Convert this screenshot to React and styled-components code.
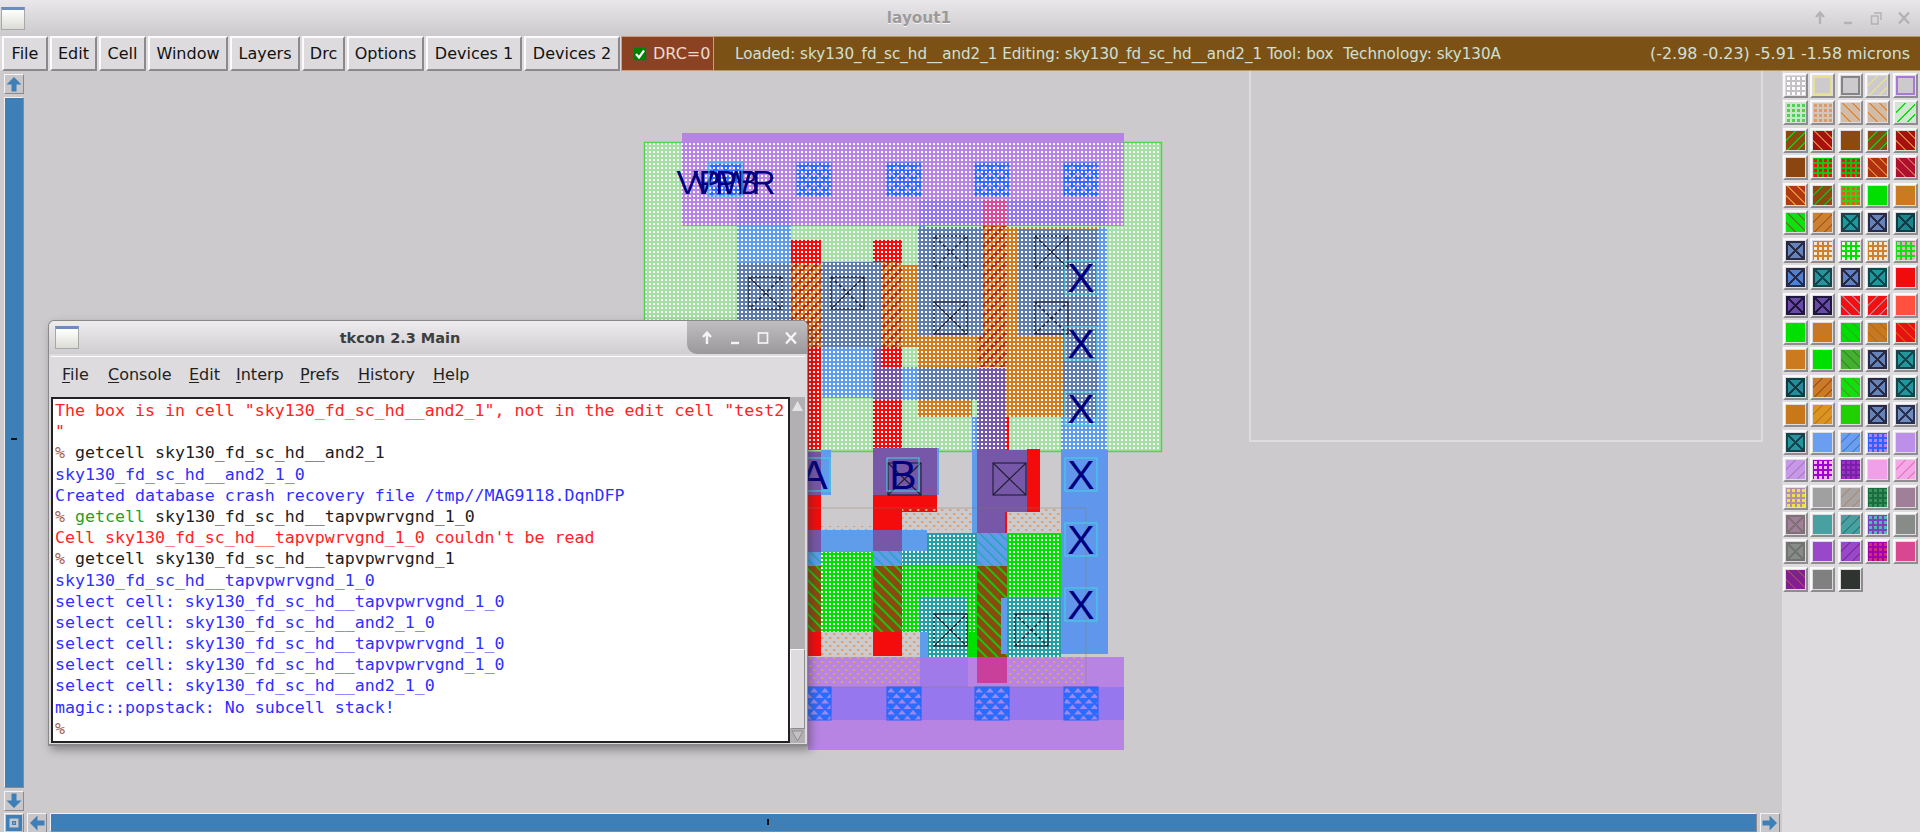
import React from 'react';
import styled, { createGlobalStyle } from 'styled-components';

const Global = createGlobalStyle`
  html, body { margin: 0; padding: 0; background: #cccacc; }
  body { font-family: 'DejaVu Sans', sans-serif; }
`;

const Screen = styled.div`
  position: relative;
  width: 1920px;
  height: 832px;
  overflow: hidden;
  display: flex;
  flex-direction: column;
  background: #cccacc;
`;

const TitleBar = styled.div`
  height: 36px;
  flex: none;
  display: flex;
  align-items: center;
  padding: 0 9px 0 1px;
  background: linear-gradient(#e9e7e9, #cbc9cb);
`;

const WinIcon = styled.div`
  width: 22px;
  height: 19px;
  flex: none;
  border: 1px solid #a8a8a8;
  border-top: 3px solid #6c8cc0;
  background: linear-gradient(#ffffff, #dcdcd6);
`;

const TitleText = styled.div`
  flex: 1;
  text-align: center;
  font-size: ${p => p.$size}px;
  font-weight: bold;
  color: ${p => p.$color};
  padding-left: ${p => p.$left}px;
  text-shadow: ${p => (p.$soft ? '0 1px 0 #f4f4f4' : 'none')};
`;

const WinButtons = styled.div`
  display: flex;
  align-items: center;
  gap: 14px;
`;

const Toolbar = styled.div`
  height: 35px;
  flex: none;
  display: flex;
  padding-left: 2px;
  gap: 2px;
  background: #dddbdd;
`;

const MenuButton = styled.div`
  width: ${p => p.$w}px;
  box-sizing: border-box;
  display: flex;
  align-items: center;
  justify-content: center;
  font-size: 16px;
  color: #111;
  background: #dddbdd;
  border: 2px solid;
  border-color: #fbfbfb #8b898b #8b898b #fbfbfb;
`;

const DrcBox = styled.div`
  width: 93px;
  margin-left: -1px;
  box-sizing: border-box;
  display: flex;
  align-items: center;
  gap: 7px;
  padding-left: 12px;
  font-size: 16px;
  color: #ecdccc;
  background: #8b4222;
  border: 1px solid #c8a080;
`;

const Check = styled.div`
  width: 12px;
  height: 12px;
  flex: none;
  display: flex;
  align-items: center;
  justify-content: center;
  background: #008000;
  outline: 1px solid #6a4a3a;
`;

const StatusBar = styled.div`
  flex: 1;
  margin-left: -2px;
  display: flex;
  justify-content: space-between;
  align-items: center;
  padding: 0 10px 0 21px;
  white-space: pre;
  color: #cfe0d6;
  background: #7b5116;
  border-top: 1px solid #b89868;
  border-bottom: 1px solid #b89868;
`;

const StatusText = styled.span`
  font-size: ${p => p.$size}px;
`;

const Body = styled.div`
  flex: 1;
  min-height: 0;
  display: flex;
`;

const LeftArea = styled.div`
  width: 1782px;
  flex: none;
  display: flex;
  flex-direction: column;
`;

const MiddleRow = styled.div`
  flex: 1;
  min-height: 0;
  display: flex;
`;

const VScroll = styled.div`
  width: 24px;
  flex: none;
  box-sizing: border-box;
  padding: 3px 0 2px 4px;
  display: flex;
  flex-direction: column;
  gap: 3px;
`;

const ArrowButton = styled.div`
  width: 20px;
  height: 20px;
  flex: none;
  box-sizing: border-box;
  border: 1px solid;
  border-color: #f4f4f4 #8b898b #8b898b #f4f4f4;
  background: #c8c6c8;
  display: flex;
  align-items: center;
  justify-content: center;
`;

const ArrowSvg = styled.svg`
  transform: rotate(${p => p.$rot}deg);
`;

const ScrollThumb = styled.div`
  position: relative;
  flex: 1;
  min-width: 0;
  box-sizing: border-box;
  background: #3f7fb7;
  border: 1px solid;
  border-color: #f0f0f0 #8b898b #8b898b #f0f0f0;
`;

const ThumbMark = styled.div`
  position: absolute;
  background: #111;
  ${p => (p.$vertical
    ? 'left: 6px; top: 340px; width: 6px; height: 2px;'
    : 'left: 716px; top: 5px; width: 2px; height: 6px;')}
`;

const Canvas = styled.div`
  position: relative;
  flex: 1;
  min-width: 0;
  background: #cccacc;
`;

const BoxOutline = styled.div`
  position: absolute;
  left: 1225px;
  top: 0;
  width: 510px;
  height: 369px;
  border: solid #dedcde;
  border-width: 0 2px 2px 2px;
`;

const HScroll = styled.div`
  height: 19px;
  flex: none;
  display: flex;
  gap: 3px;
  padding: 0 2px 0 4px;
`;

const Palette = styled.div`
  flex: 1;
  display: grid;
  grid-template-columns: repeat(5, 27.44px);
  grid-auto-rows: 27.44px;
  align-content: start;
  padding: 2px 0 0 1px;
  background: #dddbdd;
`;

const Swatch = styled.div`
  width: 25px;
  height: 25px;
  box-sizing: border-box;
  padding: 1px;
  border: 2px solid;
  border-color: #f8f8f8 #8e8c8e #8e8c8e #f8f8f8;
  background: #dddbdd;
`;

const fills = {
  hatch: p => `repeating-linear-gradient(135deg, transparent 0 6px, ${p.$ink} 6px 7.5px)`,
  back: p => `repeating-linear-gradient(45deg, transparent 0 6px, ${p.$ink} 6px 7.5px)`,
  dots: p => `radial-gradient(circle, ${p.$ink} 1.5px, transparent 2px) 0 0 / 5px 5px`,
  cross: p => `linear-gradient(45deg, transparent 47%, ${p.$ink} 47% 53%, transparent 53%),
    linear-gradient(-45deg, transparent 47%, ${p.$ink} 47% 53%, transparent 53%)`,
};

const SwatchFill = styled.div`
  width: 100%;
  height: 100%;
  box-sizing: border-box;
  background: ${p => (fills[p.$kind] ? `${fills[p.$kind](p)}, ${p.$bg}` : p.$bg)};
  ${p => (p.$kind === 'cross' || p.$kind === 'box' ? `box-shadow: inset 0 0 0 2px ${p.$ink};` : '')}
`;

const TkWindow = styled.div`
  position: absolute;
  left: 48px;
  top: 320px;
  width: 760px;
  height: 426px;
  box-sizing: border-box;
  display: flex;
  flex-direction: column;
  border-radius: 6px 6px 0 0;
  background: #dddbdd;
  border: 1px solid #8a888a;
  border-bottom-width: 2px;
  box-shadow: 3px 4px 8px rgba(50, 50, 50, 0.45);
`;

const TkTitle = styled.div`
  height: 33px;
  flex: none;
  display: flex;
  align-items: center;
  padding-left: 6px;
  border-radius: 6px 6px 0 0;
  background: linear-gradient(#eeecee, #cfcdcf);
`;

const TkButtons = styled.div`
  width: 120px;
  height: 33px;
  flex: none;
  box-sizing: border-box;
  padding-left: 13px;
  display: flex;
  align-items: center;
  border-radius: 0 6px 0 10px;
  background: linear-gradient(#c0bec0, #9a989a);
`;

const TkMenu = styled.div`
  height: 40px;
  flex: none;
  position: relative;
  margin: 2px 2px 0 2px;
  border-top: 1px solid #fbfbfb;
  font-size: 16px;
  color: #222;
`;

const TkMenuItem = styled.span`
  position: absolute;
  top: 8px;
  left: ${p => p.$x}px;
`;

const Key = styled.span`
  text-decoration: underline;
  text-underline-offset: 2px;
`;

const TkBody = styled.div`
  flex: 1;
  min-height: 0;
  display: flex;
  margin: 0 2px 1px 2px;
`;

const Console = styled.div`
  flex: 1;
  min-width: 0;
  box-sizing: border-box;
  padding: 1px 0 0 2px;
  background: #fff;
  border: 2px solid #222;
  font-family: 'DejaVu Sans Mono', monospace;
  font-size: 16.6px;
  line-height: 21.2px;
  white-space: pre;
  overflow: hidden;
`;

const Line = styled.div`
  height: 21.2px;
  color: ${p => p.$color};
`;

const Span = styled.span`
  color: ${p => p.$color};
`;

const TkScroll = styled.div`
  width: 15px;
  flex: none;
  display: flex;
  flex-direction: column;
  background: #b2b0b2;
  padding-top: 2px;
`;

const TkTrack = styled.div`
  flex: 1;
`;

const TkThumb = styled.div`
  height: 80px;
  flex: none;
  background: #dddbdd;
  border: 1px solid;
  border-color: #f8f8f8 #8e8c8e #8e8c8e #f8f8f8;
  box-sizing: border-box;
`;

const TkArrow = styled.div`
  height: 14px;
  flex: none;
  display: flex;
  justify-content: center;
  align-items: center;
`;

const LayoutSvg = styled.svg`
  position: absolute;
  left: 0;
  top: 0;
  display: block;
`;

const ArrowIcon = ({ rot }) => (
  <ArrowSvg $rot={rot} width="16" height="16" viewBox="0 0 16 16">
    <path d="M8 1L15.5 8.5H10.5V15.5H5.5V8.5H.5Z" fill="#3f7fb7" />
  </ArrowSvg>
);

const WinGlyphs = ({ color, wide }) => (
  <>
    <svg width="14" height="16" viewBox="0 0 14 16">
      <path d="M7 14V3M3 7L7 2.5L11 7" stroke={color} strokeWidth="2.4" fill="none" />
    </svg>
    <svg width="14" height="16" viewBox="0 0 14 16">
      <path d="M3 13H11" stroke={color} strokeWidth="2.4" fill="none" />
    </svg>
    <svg width="14" height="16" viewBox="0 0 14 16">
      {wide ? <rect x="2.5" y="3" width="9" height="10" stroke={color} strokeWidth="1.7" fill="none" />
        : <path d="M5 3H12V10M2.5 6H9V14H2.5Z" stroke={color} strokeWidth="1.5" fill="none" />}
    </svg>
    <svg width="14" height="16" viewBox="0 0 14 16">
      <path d="M2 2.5L12 13.5M12 2.5L2 13.5" stroke={color} strokeWidth="2.4" fill="none" />
    </svg>
  </>
);

const menus = [
  ['File', 46], ['Edit', 47], ['Cell', 47], ['Window', 80], ['Layers', 70],
  ['Drc', 43], ['Options', 77], ['Devices 1', 96], ['Devices 2', 96],
];

const tkMenus = [
  ['F', 'ile', 11], ['C', 'onsole', 57], ['E', 'dit', 138], ['I', 'nterp', 185],
  ['P', 'refs', 249], ['H', 'istory', 307], ['H', 'elp', 382],
];

const G = '#00e000', O = '#cc7a20', SL = '#6483b8', TE = '#22969c', DK = '#2a2a44';

// kind, background, ink
const swatches = [
  ['dots', '#c4c2c4', '#ffffff'], ['box', '#cccacc', '#e8e090'], ['box', '#cccacc', '#858585'], ['hatch', '#cccacc', '#e8e090'], ['box', '#cccacc', '#a878d8'],
  ['dots', '#c8e6c8', '#52d052'], ['dots', '#d2c6ba', '#dc9a68'], ['back', '#d2bca8', '#dc8a3c'], ['back', '#d2bca8', '#dc8a3c'], ['hatch', '#cfe8cf', '#14dc14'],
  ['hatch', '#8b4a10', '#18c818'], ['back', '#a81010', '#d08030'], ['solid', '#8b4a10'], ['hatch', '#8b4a10', '#18c818'], ['back', '#a81010', '#d08030'],
  ['solid', '#8b4510'], ['dots', '#10c810', '#f01010'], ['dots', '#10c010', '#e81818'], ['back', '#b03010', '#d08030'], ['back', '#b01030', '#d06050'],
  ['back', '#b03a10', '#e09030'], ['hatch', '#8b4a10', '#20b020'], ['dots', '#38d010', '#e06020'], ['solid', G], ['solid', O],
  ['back', '#10e010', '#508020'], ['hatch', '#cc8030', '#a86020'], ['cross', TE, '#14444c'], ['cross', SL, DK], ['cross', '#1c868c', '#103a44'],
  ['cross', SL, DK], ['dots', '#cc8030', '#f4e8d8'], ['dots', G, '#f0f8f0'], ['dots', '#cc8030', '#f4e8d8'], ['dots', '#10e010', '#e8b0c8'],
  ['cross', '#5080d0', DK], ['cross', TE, '#14444c'], ['cross', '#5a80c8', DK], ['cross', TE, '#14444c'], ['solid', '#f00c0c'],
  ['cross', '#6a4aa8', '#20183c'], ['cross', '#6a4aa8', '#20183c'], ['back', '#f41010', '#b08090'], ['hatch', '#f41010', '#b08090'], ['solid', '#ff5040'],
  ['solid', G], ['solid', '#c87820'], ['back', G, '#20b820'], ['back', '#c87820', '#b86c18'], ['back', '#e81010', '#d85010'],
  ['solid', O], ['solid', G], ['back', '#44b030', '#389028'], ['cross', SL, DK], ['cross', TE, '#14444c'],
  ['cross', '#2a8a9c', '#103a44'], ['hatch', '#cc7a28', '#a05818'], ['back', '#10e010', '#50a020'], ['cross', SL, DK], ['cross', TE, '#14444c'],
  ['solid', '#c87818'], ['hatch', '#dc9420', '#c07c18'], ['solid', '#20d000'], ['cross', SL, DK], ['cross', '#6e8cc0', '#2a3050'],
  ['cross', TE, '#14444c'], ['solid', '#6a9ef0'], ['hatch', '#6a9ef0', '#5080c8'], ['dots', '#3060ff', '#b080f0'], ['solid', '#bc90e8'],
  ['hatch', '#c898e8', '#b080c8'], ['dots', '#a000d0', '#f0b8f0'], ['dots', '#7a20a8', '#a030c8'], ['solid', '#f0a0e8'], ['hatch', '#f4a8e8', '#e880c0'],
  ['dots', '#b090b0', '#f0e040'], ['solid', '#a0a0a0'], ['hatch', '#a8a4a4', '#a89080'], ['dots', '#1c6c3c', '#389060'], ['solid', '#a08098'],
  ['cross', '#a08098', '#807078'], ['solid', '#48a0a0'], ['hatch', '#48a0a0', '#308080'], ['dots', '#7a40c0', '#48c0b0'], ['solid', '#888c88'],
  ['cross', '#888c88', '#707470'], ['solid', '#9848c8'], ['hatch', '#9848c8', '#8030a0'], ['dots', '#a000b0', '#d03070'], ['solid', '#d84890'],
  ['back', '#802090', '#a04070'], ['solid', '#808080'], ['solid', '#303430'],
];

const NW = '#a4dfa4';
const BLUE = '#5f9cea', MET = '#b884e4', METLI = '#9677ee', SLATE = '#5f7cae', RED = '#f40c0c', ORG = '#d27c20';
const PUR = '#7758a8', POLYH = 'url(#polyHatch)', GATE = 'url(#gateHatch)', TEALH = 'url(#tealHatch)', TEAL = '#22a0a4';
const DOTS = 'url(#whiteDots)', TAN = 'url(#tanDots)', VIA = 'url(#viaTri)';

// x1, y1, x2, y2, fill: painted in order, later ones sit on top
const topLayers = [
  [682, 133, 1124, 226, MET],
  [737, 200, 791, 226, METLI],
  [919, 200, 1107, 226, METLI],
  [737, 226, 791, 263, BLUE],
  [737, 263, 791, 320, SLATE],
  [791, 240, 821, 263, RED],
  [791, 263, 823, 347, ORG],
  [791, 263, 823, 347, POLYH],
  [808, 347, 821, 450, RED],
  [822, 262, 881, 347, SLATE],
  [822, 347, 874, 398, BLUE],
  [873, 240, 902, 262, RED],
  [881, 262, 902, 347, ORG],
  [881, 262, 902, 347, POLYH],
  [873, 347, 902, 400, PUR],
  [881, 347, 902, 367, RED],
  [873, 400, 902, 452, RED],
  [902, 265, 918, 335, ORG],
  [919, 226, 925, 263, BLUE],
  [918, 227, 983, 335, SLATE],
  [983, 200, 1007, 226, '#d84c9c'],
  [1007, 227, 1018, 335, ORG],
  [1018, 227, 1098, 229, ORG],
  [1018, 229, 1098, 335, SLATE],
  [1098, 227, 1107, 452, BLUE],
  [902, 335, 1063, 367, ORG],
  [902, 347, 918, 367, NW],
  [1006, 367, 1063, 417, ORG],
  [918, 400, 972, 417, ORG],
  [918, 367, 977, 400, SLATE],
  [902, 367, 918, 400, BLUE],
  [983, 226, 1007, 335, ORG],
  [983, 226, 1007, 335, POLYH],
  [977, 335, 1007, 367, ORG],
  [977, 335, 1007, 367, POLYH],
  [977, 368, 1006, 452, PUR],
  [972, 417, 977, 452, BLUE],
  [1006, 417, 1009, 452, RED],
  [1063, 335, 1098, 417, SLATE],
  [1061, 417, 1098, 452, BLUE],
];

const lowerLayers = [
  [808, 452, 821, 495, PUR],
  [821, 450, 831, 495, BLUE],
  [808, 495, 821, 530, RED],
  [873, 448, 937, 495, PUR],
  [937, 448, 939, 495, BLUE],
  [873, 495, 937, 512, RED],
  [873, 512, 902, 530, RED],
  [821, 526, 873, 530, TAN],
  [902, 508, 972, 530, TAN],
  [1007, 508, 1062, 533, TAN],
  [972, 450, 977, 533, BLUE],
  [977, 450, 1027, 512, PUR],
  [1027, 449, 1040, 512, RED],
  [977, 512, 1007, 533, PUR],
  [1005, 512, 1007, 566, RED],
  [1061, 450, 1108, 654, '#6097ec'],
  [821, 530, 873, 552, BLUE],
  [808, 530, 821, 552, PUR],
  [873, 530, 902, 551, PUR],
  [902, 530, 927, 551, BLUE],
  [821, 552, 873, 632, G],
  [902, 551, 977, 632, G],
  [927, 533, 977, 566, TEAL],
  [902, 551, 927, 566, TEAL],
  [1007, 533, 1061, 598, G],
  [1007, 598, 1061, 657, TEAL],
  [920, 598, 968, 632, TEAL],
  [928, 632, 968, 657, TEAL],
  [968, 632, 977, 657, G],
  [920, 632, 928, 657, BLUE],
  [808, 552, 821, 566, BLUE],
  [873, 551, 902, 566, BLUE],
  [977, 533, 1007, 566, BLUE],
  [808, 552, 821, 566, TEALH],
  [873, 551, 902, 566, TEALH],
  [977, 533, 1007, 566, TEALH],
  [808, 566, 821, 632, '#8b4a10'],
  [808, 566, 821, 632, GATE],
  [873, 566, 902, 632, '#8b4a10'],
  [873, 566, 902, 632, GATE],
  [977, 566, 1007, 657, '#8b4a10'],
  [977, 566, 1007, 657, GATE],
  [1001, 598, 1007, 654, BLUE],
  [808, 632, 821, 656, RED],
  [873, 632, 902, 656, RED],
  [821, 632, 873, 657, TAN],
  [902, 632, 920, 657, TAN],
  [808, 657, 1124, 750, MET],
  [808, 687, 1124, 720, METLI],
  [808, 657, 920, 685, TAN],
  [1007, 657, 1085, 683, TAN],
  [920, 657, 968, 687, '#a07ae8'],
  [977, 657, 1007, 683, '#c8409a'],
];

const lowerDots = [
  [821, 552, 873, 632],
  [902, 551, 977, 632],
  [928, 632, 968, 657],
  [1007, 533, 1061, 657],
  [927, 533, 977, 551],
];

const vias = [709, 797, 887, 975, 1064];
const contactsTop = [[749, 277], [831, 277], [934, 236], [934, 302], [1035, 236], [1035, 302]];
const contactsLow = [[888, 463], [993, 463]];
const contactsDiff = [[934, 614], [1015, 614]];
const pinY = [261, 327, 392, 458, 523, 588];

const R = ({ r }) => <rect x={r[0]} y={r[1]} width={r[2] - r[0]} height={r[3] - r[1]} fill={r[4]} />;

const Contact = ({ x, y }) => (
  <g fill="none" stroke="#1e1e30" strokeWidth="1.1">
    <rect x={x} y={y} width="33" height="32" />
    <path d={`M${x} ${y}L${x + 33} ${y + 32}M${x + 33} ${y}L${x} ${y + 32}`} />
  </g>
);

const PinLabel = ({ x, y, children }) => (
  <g>
    <rect x={x} y={y} width="32" height="33" fill="none" stroke="#3cd8e0" strokeWidth="1" />
    <text x={x + 16} y={y + 31} textAnchor="middle" fontFamily="'Liberation Sans', sans-serif" fontSize="41" fill="#00007f">{children}</text>
  </g>
);

const LayoutView = () => (
  <LayoutSvg width="1758" height="742" viewBox="24 71 1758 742">
    <defs>
      <pattern id="whiteDots" width="4" height="4" patternUnits="userSpaceOnUse" x="644" y="142">
        <rect x="1" y="1" width="2" height="2" fill="#fff" />
      </pattern>
      <pattern id="tanDots" width="8" height="8" patternUnits="userSpaceOnUse">
        <rect width="8" height="8" fill="transparent" />
        <rect x="1" y="1" width="2.4" height="2" fill="#e2a068" />
        <rect x="5" y="5" width="2.4" height="2" fill="#e2a068" />
      </pattern>
      <pattern id="polyHatch" width="7" height="7" patternUnits="userSpaceOnUse" patternTransform="rotate(45)">
        <rect width="3.4" height="7" fill="#bb2c10" />
      </pattern>
      <pattern id="gateHatch" width="8" height="8" patternUnits="userSpaceOnUse" patternTransform="rotate(-45)">
        <rect width="1.8" height="8" fill="#10d010" />
      </pattern>
      <pattern id="tealHatch" width="7" height="7" patternUnits="userSpaceOnUse" patternTransform="rotate(-45)">
        <rect width="1.2" height="7" fill="#18a8a8" />
      </pattern>
      <pattern id="viaTri" width="11" height="11" patternUnits="userSpaceOnUse">
        <rect width="11" height="11" fill="#2a6cff" />
        <path d="M1.5 5L5.5 .5L9.5 5Z M-4 10.5L0 6L4 10.5Z M7 10.5L11 6L15 10.5Z" fill="#9c88f0" />
      </pattern>
    </defs>

    <rect x="644" y="142" width="518" height="310" fill={NW} />
    {topLayers.map((r, i) => <R key={i} r={r} />)}
    {vias.map(x => <rect key={x} x={x} y="163" width="34" height="33" fill={VIA} stroke="#2a6cff" />)}
    {contactsTop.map(([x, y]) => <Contact key={`${x}-${y}`} x={x} y={y} />)}
    <rect x="644" y="142" width="518" height="310" fill={DOTS} />
    <rect x="644.5" y="142.5" width="517" height="309" fill="none" stroke="#4cd44c" strokeWidth="1.4" />
    <rect x="682" y="133" width="442" height="10" fill={MET} />

    {lowerLayers.map((r, i) => <R key={i} r={r} />)}
    {contactsDiff.map(([x, y]) => <Contact key={`${x}-${y}`} x={x} y={y} />)}
    {lowerDots.map((r, i) => <rect key={i} x={r[0]} y={r[1]} width={r[2] - r[0]} height={r[3] - r[1]} fill={DOTS} />)}
    {[797, 887, 975, 1064].map(x => (
      <rect key={x} x={x} y="687" width="34" height="33" fill={VIA} stroke="#1e60ff" />
    ))}
    <rect x="797" y="508" width="289" height="179" fill="none" stroke="#8a7a6a" strokeOpacity="0.5" strokeWidth="0.8" />
    {contactsLow.map(([x, y]) => <Contact key={`${x}-${y}`} x={x} y={y} />)}

    <g fontFamily="'Liberation Sans', sans-serif" fontSize="33" fill="#00007f" textAnchor="middle">
      <text x="726" y="194">VPWR</text>
      <text x="726" y="194">VPB</text>
    </g>
    <rect x="709" y="163" width="33" height="33" fill="none" stroke="#3cd8e0" strokeWidth="1" />
    {pinY.map(y => <PinLabel key={y} x={1065} y={y}>X</PinLabel>)}
    <PinLabel x={798} y={458}>A</PinLabel>
    <PinLabel x={887} y={458}>B</PinLabel>
  </LayoutSvg>
);

const RED_T = '#ff2222', BLUE_T = '#2f2fff', GREEN_T = '#1f9f1f', PROMPT = '#a8604c', INK = '#1c1c1c';

const App = () => (
  <Screen>
    <Global />
    <TitleBar>
      <WinIcon />
      <TitleText $color="#9c9a9c" $soft $left={0} $size={15.3}>layout1</TitleText>
      <WinButtons>
        <WinGlyphs color="#b4b2b4" />
      </WinButtons>
    </TitleBar>

    <Toolbar>
      {menus.map(([name, w]) => <MenuButton key={name} $w={w}>{name}</MenuButton>)}
      <DrcBox>
        <Check>
          <svg width="10" height="10" viewBox="0 0 10 10">
            <path d="M1 5L4 8.5L9 1.5" stroke="#fff" strokeWidth="2.2" fill="none" />
          </svg>
        </Check>
        DRC=0
      </DrcBox>
      <StatusBar>
        <StatusText $size={15.13}>Loaded: sky130_fd_sc_hd__and2_1 Editing: sky130_fd_sc_hd__and2_1 Tool: box  Technology: sky130A</StatusText>
        <StatusText $size={15.9}>(-2.98 -0.23) -5.91 -1.58 microns</StatusText>
      </StatusBar>
    </Toolbar>

    <Body>
      <LeftArea>
        <MiddleRow>
          <VScroll>
            <ArrowButton><ArrowIcon rot={0} /></ArrowButton>
            <ScrollThumb><ThumbMark $vertical /></ScrollThumb>
            <ArrowButton><ArrowIcon rot={180} /></ArrowButton>
          </VScroll>
          <Canvas>
            <LayoutView />
            <BoxOutline />
          </Canvas>
        </MiddleRow>
        <HScroll>
          <ArrowButton>
            <svg width="16" height="16" viewBox="0 0 16 16">
              <rect x="0" y="0" width="16" height="16" fill="#3f7fb7" />
              <rect x="3.5" y="3.5" width="9" height="9" fill="#c8c6c8" />
              <rect x="6" y="6" width="4" height="4" fill="#3f7fb7" />
              <rect x="7.3" y="7.3" width="1.4" height="1.4" fill="#c8c6c8" />
            </svg>
          </ArrowButton>
          <ArrowButton><ArrowIcon rot={270} /></ArrowButton>
          <ScrollThumb><ThumbMark /></ScrollThumb>
          <ArrowButton><ArrowIcon rot={90} /></ArrowButton>
        </HScroll>
      </LeftArea>
      <Palette>
        {swatches.map(([kind, bg, ink], i) => (
          <Swatch key={i}><SwatchFill $kind={kind} $bg={bg} $ink={ink} /></Swatch>
        ))}
      </Palette>
    </Body>

    <TkWindow>
      <TkTitle>
        <WinIcon />
        <TitleText $color="#3e3e3e" $left={34} $size={14.5}>tkcon 2.3 Main</TitleText>
        <TkButtons>
          <WinButtons>
            <WinGlyphs color="#f4f4f4" wide />
          </WinButtons>
        </TkButtons>
      </TkTitle>
      <TkMenu>
        {tkMenus.map(([key, rest, x]) => (
          <TkMenuItem key={key + rest} $x={x}><Key>{key}</Key>{rest}</TkMenuItem>
        ))}
      </TkMenu>
      <TkBody>
        <Console>
          <Line $color={RED_T}>The box is in cell "sky130_fd_sc_hd__and2_1", not in the edit cell "test2</Line>
          <Line $color={RED_T}>"</Line>
          <Line $color={INK}><Span $color={PROMPT}>%</Span> getcell sky130_fd_sc_hd__and2_1</Line>
          <Line $color={BLUE_T}>sky130_fd_sc_hd__and2_1_0</Line>
          <Line $color={BLUE_T}>Created database crash recovery file /tmp//MAG9118.DqnDFP</Line>
          <Line $color={INK}><Span $color={PROMPT}>%</Span> <Span $color={GREEN_T}>getcell</Span> sky130_fd_sc_hd__tapvpwrvgnd_1_0</Line>
          <Line $color={RED_T}>Cell sky130_fd_sc_hd__tapvpwrvgnd_1_0 couldn't be read</Line>
          <Line $color={INK}><Span $color={PROMPT}>%</Span> getcell sky130_fd_sc_hd__tapvpwrvgnd_1</Line>
          <Line $color={BLUE_T}>sky130_fd_sc_hd__tapvpwrvgnd_1_0</Line>
          <Line $color={BLUE_T}>select cell: sky130_fd_sc_hd__tapvpwrvgnd_1_0</Line>
          <Line $color={BLUE_T}>select cell: sky130_fd_sc_hd__and2_1_0</Line>
          <Line $color={BLUE_T}>select cell: sky130_fd_sc_hd__tapvpwrvgnd_1_0</Line>
          <Line $color={BLUE_T}>select cell: sky130_fd_sc_hd__tapvpwrvgnd_1_0</Line>
          <Line $color={BLUE_T}>select cell: sky130_fd_sc_hd__and2_1_0</Line>
          <Line $color={BLUE_T}>magic::popstack: No subcell stack!</Line>
          <Line $color={PROMPT}>%</Line>
        </Console>
        <TkScroll>
          <TkArrow>
            <svg width="13" height="12" viewBox="0 0 13 12"><path d="M6.5 1L12 11H1Z" fill="#e4e2e4" /></svg>
          </TkArrow>
          <TkTrack />
          <TkThumb />
          <TkArrow>
            <svg width="13" height="12" viewBox="0 0 13 12"><path d="M1 1H12L6.5 11Z" fill="#c4c2c4" stroke="#8e8c8e" /></svg>
          </TkArrow>
        </TkScroll>
      </TkBody>
    </TkWindow>
  </Screen>
);

export default App;
